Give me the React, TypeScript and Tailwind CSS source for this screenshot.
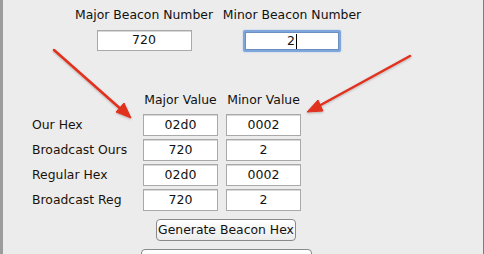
import React from "react";

const font = { fontFamily: '"Lucida Grande", "DejaVu Sans", "Noto Sans", sans-serif' };

function Field({ value }: { value: string }) {
  return (
    <div className="w-[75px] h-[22px] bg-white border border-[#a9a9a9] shadow-[inset_0_1px_0_#d8d8d8] flex items-center justify-center text-[12.5px] text-[#111]">
      {value}
    </div>
  );
}

function Row({ label, a, b }: { label: string; a: string; b: string }) {
  return (
    <div className="flex items-center h-[22px]">
      <div className="w-[111px] text-[12.4px] text-[#1a1208]">{label}</div>
      <div className="flex gap-[8px]">
        <Field value={a} />
        <Field value={b} />
      </div>
    </div>
  );
}

export default function App() {
  return (
    <div
      className="relative w-[484px] h-[254px] overflow-hidden bg-[#ececec] border-l-[3px] border-l-[#9c9c9c] border-r border-r-[#7d7d7d]"
      style={font}
    >
      {/* Top section */}
      <div className="flex pl-[69px] pt-[7px] gap-[4px]">
        <div className="w-[144px] flex flex-col items-center">
          <div className="text-[12.4px] leading-[16px] text-[#111] whitespace-nowrap">Major Beacon Number</div>
          <div className="mt-[7px] w-[95px] h-[21px] bg-white border border-[#a9a9a9] shadow-[inset_0_1px_0_#d8d8d8] flex items-center justify-center text-[12.5px] text-[#111]">
            720
          </div>
        </div>
        <div className="w-[144px] flex flex-col items-center">
          <div className="text-[12.4px] leading-[16px] text-[#111] whitespace-nowrap">Minor Beacon Number</div>
          <div className="mt-[7px] w-[98px] h-[22px] rounded-[2px] bg-[#7ea6dc] p-[2px] shadow-[0_0_2px_#a7c4ea]">
            <div className="w-full h-full bg-white border border-[#6d8fbf] flex items-center justify-center text-[12.5px] text-[#111]">
              <span>2</span>
              <span className="inline-block w-px h-[15px] bg-black ml-[1px]" />
            </div>
          </div>
        </div>
      </div>

      {/* Values section */}
      <div className="pl-[29px] mt-[39px]">
        <div className="flex h-[18px] items-center">
          <div className="w-[111px]" />
          <div className="w-[75px] text-center text-[12.4px] text-[#111] whitespace-nowrap">Major Value</div>
          <div className="w-[8px]" />
          <div className="w-[75px] text-center text-[12.4px] text-[#111] whitespace-nowrap">Minor Value</div>
        </div>
        <div className="mt-[5px] flex flex-col gap-[3px]">
          <Row label="Our Hex" a="02d0" b="0002" />
          <Row label="Broadcast Ours" a="720" b="2" />
          <Row label="Regular Hex" a="02d0" b="0002" />
          <Row label="Broadcast Reg" a="720" b="2" />
        </div>
        <div className="mt-[8px] flex justify-start pl-[124px]">
          <div className="h-[22px] w-[140px] rounded-[4px] border border-[#8a8a8a] bg-gradient-to-b from-white to-[#ececec] flex items-center justify-center text-[12.4px] text-[#111] whitespace-nowrap">
            Generate Beacon Hex
          </div>
        </div>
        <div className="mt-[8px] pl-[109px]">
          <div className="h-[22px] w-[171px] rounded-[4px] border border-[#8a8a8a] bg-gradient-to-b from-white to-[#ececec]" />
        </div>
      </div>

      {/* Arrows overlay */}
      <svg className="absolute left-[-3px] top-0 pointer-events-none" width="484" height="254">
        <defs>
          <filter id="sh" x="-10%" y="-10%" width="120%" height="120%">
            <feDropShadow dx="0" dy="1" stdDeviation="0.8" floodColor="#000" floodOpacity="0.25" />
          </filter>
        </defs>
        <g filter="url(#sh)" fill="#e0301e" stroke="#e0301e">
          <line x1="54" y1="50" x2="123" y2="111" strokeWidth="2.5" strokeLinecap="round" />
          <polygon points="131,118 116,112 124,103" strokeWidth="1" strokeLinejoin="round" />
          <line x1="410" y1="56" x2="317" y2="107" strokeWidth="2.5" strokeLinecap="round" />
          <polygon points="307,112 318,100 323,111" strokeWidth="1" strokeLinejoin="round" />
        </g>
        <rect x="0" y="38" width="2" height="4" fill="#5a8fc0" />
        <rect x="0" y="56" width="2" height="3" fill="#4a4a4a" />
      </svg>
    </div>
  );
}
